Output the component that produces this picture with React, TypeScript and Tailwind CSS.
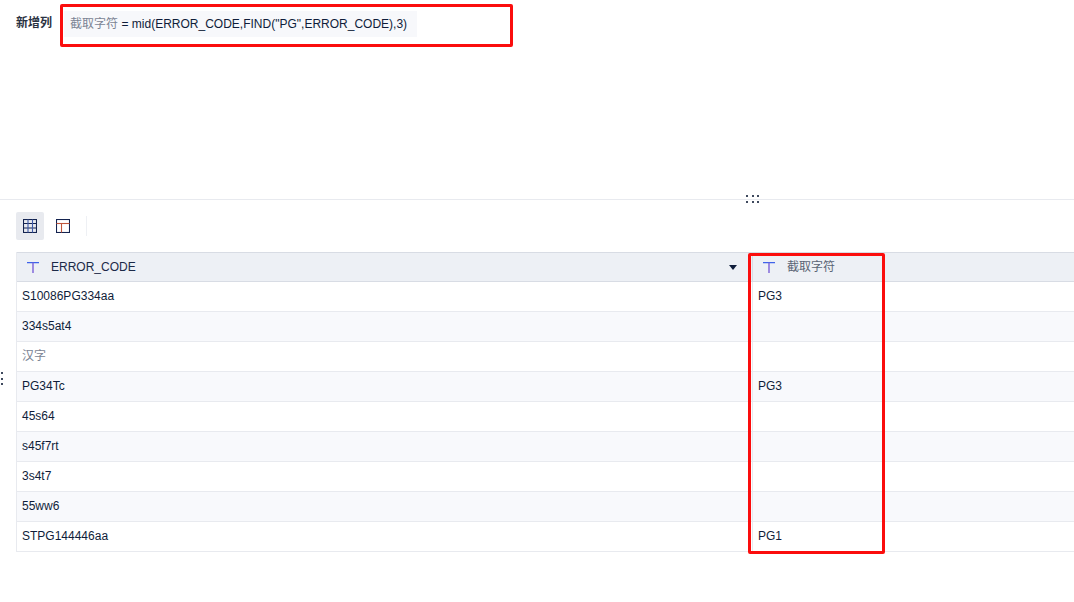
const rows: [string, string][] = [
  ["S10086PG334aa", "PG3"],
  ["334s5at4", ""],
  ["汉字", ""],
  ["PG34Tc", "PG3"],
  ["45s64", ""],
  ["s45f7rt", ""],
  ["3s4t7", ""],
  ["55ww6", ""],
  ["STPG144446aa", "PG1"],
];

function TIcon() {
  return (
    <svg width="12" height="11" viewBox="0 0 12 11" fill="none" className="shrink-0">
      <path d="M0 0.6H12" stroke="#3f63ea" strokeWidth="1.3" />
      <path d="M6 0.6V11" stroke="#7a5fd8" strokeWidth="1.4" />
    </svg>
  );
}

function Dots({ className, count }: { className: string; count: number }) {
  return (
    <div className={className}>
      {Array.from({ length: count }).map((_, i) => (
        <span key={i} className="block w-[2px] h-[2px] bg-[#3f4a5e]" />
      ))}
    </div>
  );
}

export default function App() {
  return (
    <div className="relative w-[1074px] h-[602px] overflow-hidden bg-white font-['Liberation_Sans','Noto_Sans_CJK_SC',sans-serif] text-[12px] text-[#0f1d3a]">
      <div className="h-[200px] border-b border-[#e8eaef] flex items-start pl-[16px] pt-[11px]">
        <span className="w-[48px] mt-[4px] leading-[16px] font-bold text-[#2a3242]">新增列</span>
        <div className="w-[353px] h-[26px] flex items-center pl-[6px] bg-[#f7f8fb]">
          <span className="text-[#7b8494]">截取字符</span>
          <span className="ml-[3.5px]">= mid(ERROR_CODE,FIND("PG",ERROR_CODE),3)</span>
        </div>
      </div>

      <div className="pl-[16px] pt-[12px] h-[52px] flex items-start">
        <div className="w-[28px] h-[28px] rounded-[2px] bg-[#e8eaef] flex items-center justify-center">
          <svg width="14" height="14" viewBox="0 0 14 14" fill="none" stroke="#14234f" strokeWidth="1.1">
            <rect x="0.5" y="0.5" width="13" height="13" />
            <path d="M0.5 4.5H13.5M0.5 9H13.5" />
            <path d="M5 0.5V13.5M9.5 0.5V13.5" stroke="#3f5aa8" />
          </svg>
        </div>
        <div className="w-[28px] h-[28px] ml-[5px] flex items-center justify-center">
          <svg width="14" height="14" viewBox="0 0 14 14" fill="none" stroke="#14234f" strokeWidth="1.1">
            <rect x="0.5" y="0.5" width="13" height="13" />
            <path d="M0.5 4.5H13.5" stroke="#c0563c" />
            <path d="M5.5 4.5V13.5" stroke="#c0563c" />
          </svg>
        </div>
        <div className="w-px h-[20px] ml-[9px] mt-[4px] bg-[#eef0f4]" />
      </div>

      <div className="ml-[16px] border-l border-[#e8eaef]">
        <div className="flex h-[30px] bg-[#edf0f5] border-b border-[#d8dce4] border-t">
          <div className="w-[735px] flex items-center pl-[10px] pr-[15px]">
            <TIcon />
            <span className="ml-[12px] text-[#1c2a48]">ERROR_CODE</span>
            <span className="ml-auto w-0 h-0 border-x-[4px] border-x-transparent border-t-[5px] border-t-[#0f1d3a]" />
          </div>
          <div className="flex-1 flex items-center pl-[10px] border-l border-[#d8dce4]">
            <TIcon />
            <span className="ml-[12px] text-[#5a6474]">截取字符</span>
          </div>
        </div>
        {rows.map(([a, b], i) => (
          <div
            key={i}
            className={`flex h-[30px] border-b border-[#e8eaef] ${i % 2 === 1 ? "bg-[#f8f9fc]" : "bg-white"}`}
          >
            <div className={`w-[735px] flex items-center pl-[5px] pb-[1px] ${a === "汉字" ? "text-[#7b8494]" : ""}`}>{a}</div>
            <div className="flex-1 flex items-center pl-[5px] pb-[1px] border-l border-[#e8eaef]">{b}</div>
          </div>
        ))}
      </div>

      <Dots count={6} className="absolute left-[746px] top-[195px] grid grid-cols-3 gap-x-[3.5px] gap-y-[4px]" />
      <Dots count={3} className="absolute left-[1px] top-[372px] flex flex-col gap-y-[3.5px]" />

      <div className="absolute left-[60px] top-[4px] w-[453px] h-[43px] border-[3px] border-[#fb0d0d] rounded-[2px]" />
      <div className="absolute left-[748px] top-[253px] w-[137px] h-[301px] border-[3px] border-[#fb0d0d] rounded-[2px]" />
    </div>
  );
}
